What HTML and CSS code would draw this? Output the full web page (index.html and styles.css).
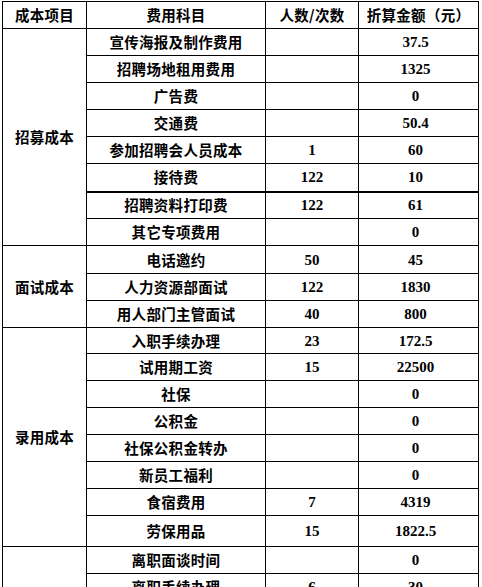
FILE: index.html
```html
<!DOCTYPE html>
<html lang="zh-CN">
<head>
<meta charset="utf-8">
<link rel="stylesheet" href="styles.css">
</head>
<body>
<div class="wrap">
<table class="cost">
<colgroup>
<col class="c1"><col class="c2"><col class="c3"><col class="c4">
</colgroup>
<thead>
<tr><th>成本项目</th><th>费用科目</th><th>人数/次数</th><th>折算金额（元）</th></tr>
</thead>
<tbody>
<tr><td class="grp" rowspan="8">招募成本</td><td>宣传海报及制作费用</td><td></td><td class="num amt">37.5</td></tr>
<tr><td>招聘场地租用费用</td><td></td><td class="num amt">1325</td></tr>
<tr><td>广告费</td><td></td><td class="num amt">0</td></tr>
<tr><td>交通费</td><td></td><td class="num amt">50.4</td></tr>
<tr><td>参加招聘会人员成本</td><td class="num">1</td><td class="num amt">60</td></tr>
<tr class="r28"><td>接待费</td><td class="num">122</td><td class="num amt">10</td></tr>
<tr class="thick"><td>招聘资料打印费</td><td class="num">122</td><td class="num amt">61</td></tr>
<tr><td>其它专项费用</td><td></td><td class="num amt">0</td></tr>
<tr class="r28"><td class="grp" rowspan="3">面试成本</td><td>电话邀约</td><td class="num">50</td><td class="num amt">45</td></tr>
<tr><td>人力资源部面试</td><td class="num">122</td><td class="num amt">1830</td></tr>
<tr><td>用人部门主管面试</td><td class="num">40</td><td class="num amt">800</td></tr>
<tr class="r26"><td class="grp" rowspan="8">录用成本</td><td>入职手续办理</td><td class="num">23</td><td class="num amt">172.5</td></tr>
<tr><td>试用期工资</td><td class="num">15</td><td class="num amt">22500</td></tr>
<tr><td>社保</td><td></td><td class="num amt">0</td></tr>
<tr><td>公积金</td><td></td><td class="num amt">0</td></tr>
<tr><td>社保公积金转办</td><td></td><td class="num amt">0</td></tr>
<tr><td>新员工福利</td><td></td><td class="num amt">0</td></tr>
<tr><td>食宿费用</td><td class="num">7</td><td class="num amt">4319</td></tr>
<tr class="r31"><td>劳保用品</td><td class="num">15</td><td class="num amt">1822.5</td></tr>
<tr><td class="grp" rowspan="4"></td><td>离职面谈时间</td><td></td><td class="num amt">0</td></tr>
<tr><td>离职手续办理</td><td class="num">6</td><td class="num amt">30</td></tr>
<tr><td></td><td></td><td></td></tr>
<tr><td></td><td></td><td></td></tr>
</tbody>
</table>
</div>
</body>
</html>
```
FILE: styles.css
```css
html, body {
  margin: 0;
  padding: 0;
  background: #ffffff;
}
.wrap {
  padding: 1px 0 0 2px;
}
.cost {
  border-collapse: collapse;
  table-layout: fixed;
  width: 477px;
  font-family: "Liberation Serif", "Noto Sans CJK SC", serif;
  font-weight: bold;
  font-size: 14px;
  color: #000;
}
.c1 { width: 84px; }
.c2 { width: 179px; }
.c3 { width: 93px; }
.c4 { width: 120px; }
.cost th, .cost td {
  border: 1px solid #000;
  padding: 0;
  text-align: center;
  vertical-align: middle;
  line-height: 16px;
  white-space: nowrap;
  overflow: hidden;
}
.cost th, .cost td:not(.num) {
  font-family: "Noto Sans CJK SC", sans-serif;
  font-weight: bold;
  font-size: 14.5px;
  letter-spacing: 0.3px;
}
.cost tr { height: 27px; }
.cost tr.r28 { height: 28px; }
.cost tr.r26 { height: 26px; }
.cost tr.r31 { height: 31px; }
.cost tr.thick td { border-top: 2px solid #000; }
.num {
  font-family: "Liberation Serif", serif;
  font-size: 15px;
}
.cost td.amt {
  padding-right: 6px;
}
```
